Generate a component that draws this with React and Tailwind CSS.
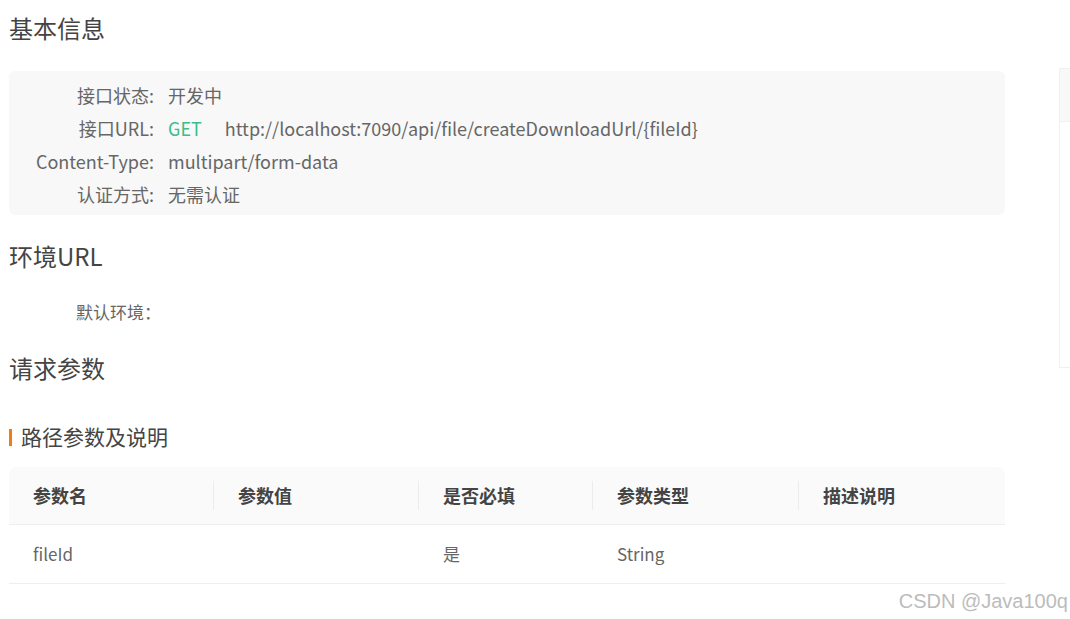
import React from "react";

const font = { fontFamily: '"Noto Sans CJK SC", "Noto Sans", sans-serif' };

const infoRows = [
  { label: "接口状态:", value: "开发中" },
  { label: "接口URL:", method: "GET", value: "http://localhost:7090/api/file/createDownloadUrl/{fileId}" },
  { label: "Content-Type:", value: "multipart/form-data" },
  { label: "认证方式:", value: "无需认证" },
];

const columns = [
  { title: "参数名", width: "w-[204px]" },
  { title: "参数值", width: "w-[205px]" },
  { title: "是否必填", width: "w-[174px]" },
  { title: "参数类型", width: "w-[206px]" },
  { title: "描述说明", width: "flex-1" },
];

const params = [["fileId", "", "是", "String", ""]];

const App = () => {
  return (
    <div className="relative flex h-[619px] w-[1070px] overflow-hidden bg-white text-[#555]" style={font}>
      {/* main content */}
      <div className="w-[1005px] shrink-0 pl-[9px] pt-[12px]">
        <h2 className="text-[24px] leading-[32px] text-[#444]">基本信息</h2>

        <div className="mt-[27px] rounded-md bg-[#f8f8f8] pt-[8px] pb-[4px]">
          {infoRows.map((row) => (
            <div key={row.label} className="flex h-[33px] items-center text-[18px]">
              <span className="w-[145px] text-right text-[#666]">{row.label}</span>
              <span className="ml-[14px] flex items-center text-[#666]">
                {row.method && (
                  <span className="mr-[23px] text-[#3dbd89]">{row.method}</span>
                )}
                {row.value}
              </span>
            </div>
          ))}
        </div>

        <h2 className="mt-[25px] text-[24px] leading-[32px] text-[#444]">环境URL</h2>
        <div className="mt-[28px] pl-[67px] text-[17px] leading-[24px] text-[#666]">默认环境：</div>

        <h2 className="mt-[28px] text-[24px] leading-[32px] text-[#444]">请求参数</h2>

        <div className="mt-[39px] flex h-[28px] items-center">
          <span className="h-[17px] w-[3px] bg-[#f57a12]" />
          <span className="ml-[9px] text-[21px] text-[#444]">路径参数及说明</span>
        </div>

        {/* table */}
        <div className="mt-[16px]">
          <div className="flex h-[58px] items-center rounded-t-lg border-b border-[#eeeeee] bg-[#fafafa]">
            {columns.map((col, i) => (
              <div key={col.title} className={`${col.width} flex items-center`}>
                {i > 0 && <span className="h-[29px] w-px bg-[#ececec]" />}
                <span className="pl-[24px] text-[18px] font-bold text-[#444]">{col.title}</span>
              </div>
            ))}
          </div>
          {params.map((row) => (
            <div key={row[0]} className="flex h-[59px] items-center border-b border-[#eeeeee]">
              {columns.map((col, i) => (
                <div key={col.title} className={`${col.width} ${i > 0 ? "pl-[25px]" : "pl-[24px]"} text-[17px] text-[#666]`}>
                  {row[i]}
                </div>
              ))}
            </div>
          ))}
        </div>
      </div>

      {/* right side panel */}
      <div className="ml-[54px] mt-[68px] h-[300px] flex-1 border-l border-t border-b border-[#f0f0f0]">
        <div className="h-[53px] border-b border-[#f0f0f0] bg-[#f8f8f8]" />
      </div>

      {/* watermark */}
      <div
        className="absolute right-[2px] bottom-[3px] text-[20px] text-[#bcbcbc]"
        style={{ fontFamily: '"Liberation Sans", Arial, sans-serif' }}
      >
        CSDN @Java100q
      </div>
    </div>
  );
};

export default App;
